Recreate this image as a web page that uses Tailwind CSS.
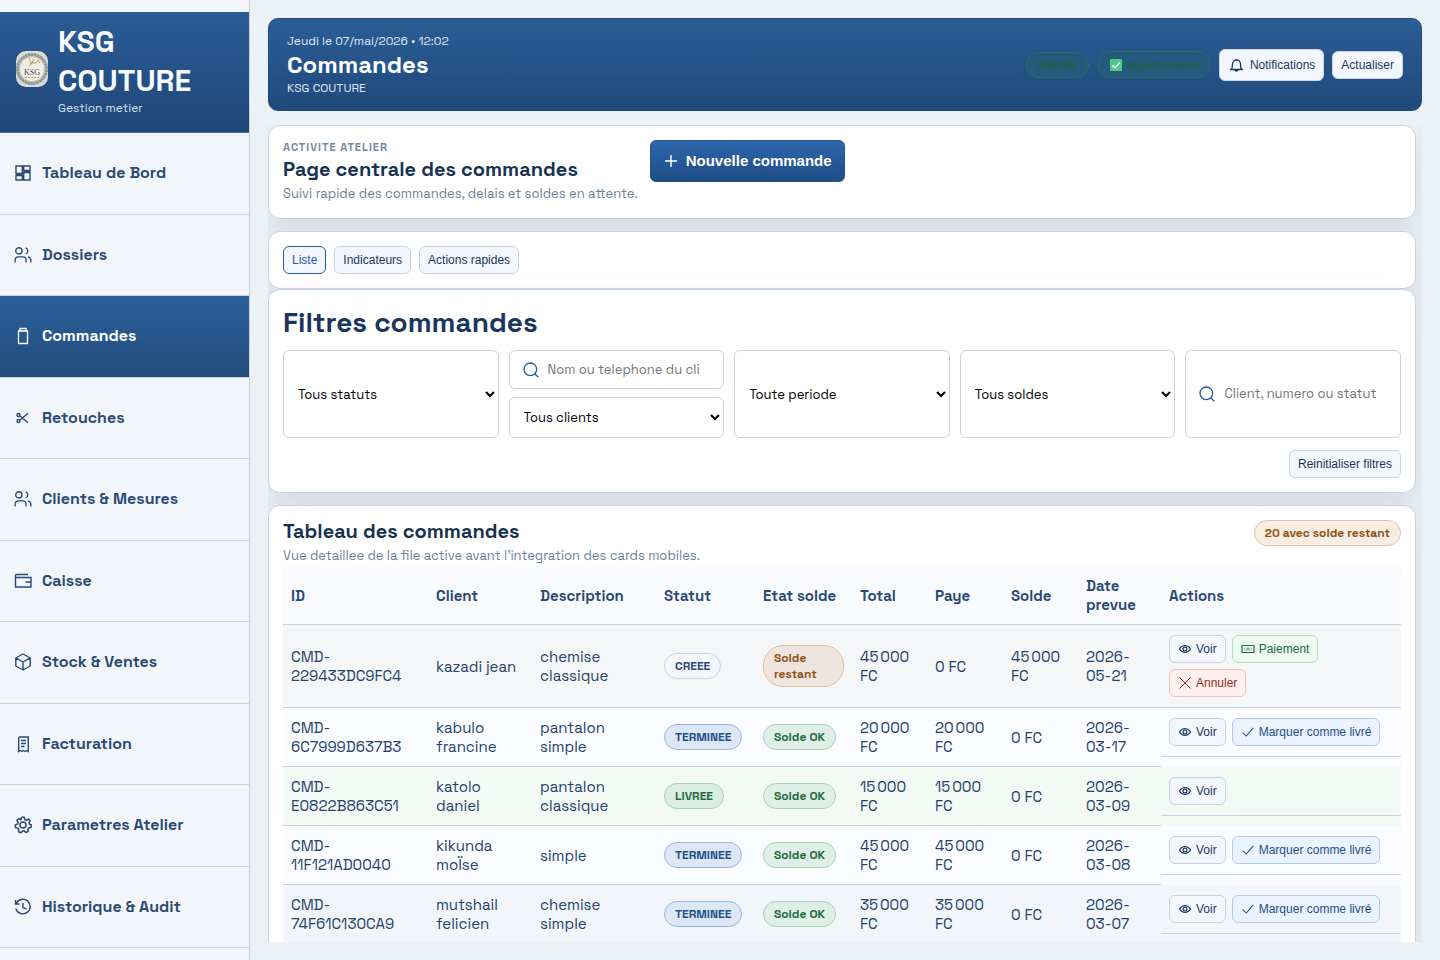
<!DOCTYPE html>
<html lang="fr">

<head>
    <meta charset="UTF-8">
    <meta name="viewport" content="width=device-width, initial-scale=1.0">
    <title>KSG COUTURE - Commandes</title>
    <script src="https://cdn.jsdelivr.net/npm/@tailwindcss/browser@4"></script>
</head>

<body class="h-screen overflow-hidden flex bg-[#ecf1f5] text-[#1b365d] font-['Space_Grotesk',Inter,sans-serif]">
    <!-- icon set -->
    <svg class="hidden" fill="none">
        <symbol id="i-search" viewBox="0 0 24 24"><circle cx="11" cy="11" r="9.500" /><path d="M17.500 17.500l5.500 5.500" /></symbol>
        <symbol id="i-users" viewBox="0 0 24 24"><circle cx="6.500" cy="6.500" r="4.200" /><path d="M1.500 22v-3.500a4 4 0 0 1 4-4h6.500a4 4 0 0 1 4 4V22M15.500 2.500a4.200 4.200 0 0 1 0 8M18.500 14.500c2.500.6 4 2.600 4 5V22" /></symbol>
        <symbol id="i-eye" viewBox="0 0 24 24"><path d="M2.500 12C5 8 8 6 12 6S19 8 21.500 12C19 16 16 18 12 18S5 16 2.500 12z" /><circle cx="12" cy="12" r="3.300" /></symbol>
        <symbol id="i-check" viewBox="0 0 24 24"><path d="M3 13l6 6L21 5" /></symbol>
    </svg>

    <aside class="w-[250px] shrink-0 border-r border-[#c8d3e2] bg-[#f2f6fb] py-3 flex flex-col">
        <div class="flex items-center gap-[10px] px-4 pt-[10px] pb-4 bg-gradient-to-b from-[#2b5c95] to-[#1f4778] border-b border-[#44709f]">
            <svg class="w-8 h-9 shrink-0 rounded-[10px]" viewBox="0 0 32 36" fill="none">
                <rect width="32" height="36" fill="#dedbd1" />
                <circle cx="16" cy="18" r="14.500" fill="#efede6" stroke="#8a959a" stroke-width="3" />
                <circle cx="16" cy="18" r="14.500" stroke="#b9bdb9" stroke-width="2" stroke-dasharray="1 2" />
                <circle cx="16" cy="18" r="12.500" stroke="#c8bfa8" stroke-width="1" />
                <path d="M14 6c-2 2 0 4 1 5s0 4-2 4M14 12h5c2 0 3-2 3-3l2 3M18 8l-3 5" stroke="#b99b62" stroke-width="1" />
                <text x="16" y="24" text-anchor="middle" font-family="Liberation Serif, serif" font-weight="400" font-size="8" fill="#3f505c">KSG</text>
                <path d="M9 26.500h14" stroke="#b99b62" stroke-width="1" stroke-dasharray="2 1" />
            </svg>
            <div>
                <div class="text-[30px] leading-[39px] font-bold text-[#f7fafe]">KSG COUTURE</div>
                <div class="text-xs leading-[16px] text-[#d3e0ef]">Gestion metier</div>
            </div>
        </div>
        <nav class="flex-1 grid auto-rows-fr text-base font-bold text-[#2b4a73]">
            <a href="#" class="flex items-center gap-[10px] px-[14px] border-b border-[#c8d3e2]">
                <svg class="w-[18px] h-[18px]" viewBox="0 0 18 18" fill="none" stroke="currentColor" stroke-width="1.400"><path d="M2 2h6.300v7.500H2zM9.700 2H16v4.500H9.700zM2 11.500h6.300V16H2zM9.700 8.500H16V16H9.700zM2 10.500h6.300M9.700 7.500H16" /></svg>
                Tableau de Bord
            </a>
            <a href="#" class="flex items-center gap-[10px] px-[14px] border-b border-[#c8d3e2]">
                <svg class="w-[18px] h-[18px]" fill="none" stroke="currentColor" stroke-width="1.800"><use href="#i-users" /></svg>
                Dossiers
            </a>
            <a href="#" aria-current="page" class="flex items-center gap-[10px] px-[14px] border-b border-[#c8d3e2] bg-gradient-to-b from-[#2b619d] to-[#234b7a] text-white">
                <svg class="w-[18px] h-[18px]" viewBox="0 0 18 18" fill="none" stroke="currentColor" stroke-width="1.300"><path d="M4.500 4h9v12.500h-9zM6 4V1.500h6V4" /></svg>
                Commandes
            </a>
            <a href="#" class="flex items-center gap-[10px] px-[14px] border-b border-[#c8d3e2]">
                <svg class="w-[18px] h-[18px]" viewBox="0 0 18 18" fill="none" stroke="currentColor" stroke-width="1.400"><circle cx="4.500" cy="6" r="1.500" /><circle cx="4.500" cy="12" r="1.500" /><path d="M6 7l8 6.800M6 11L14 4.200" /></svg>
                Retouches
            </a>
            <a href="#" class="flex items-center gap-[10px] px-[14px] border-b border-[#c8d3e2]">
                <svg class="w-[18px] h-[18px]" fill="none" stroke="currentColor" stroke-width="1.800"><use href="#i-users" /></svg>
                Clients &amp; Mesures
            </a>
            <a href="#" class="flex items-center gap-[10px] px-[14px] border-b border-[#c8d3e2]">
                <svg class="w-[18px] h-[18px]" viewBox="0 0 18 18" fill="none" stroke="currentColor" stroke-width="1.400"><path d="M14 2.500H2.500a1 1 0 0 0-1 1V15H17V5.500H1.500M17 10h-5.500" /></svg>
                Caisse
            </a>
            <a href="#" class="flex items-center gap-[10px] px-[14px] border-b border-[#c8d3e2]">
                <svg class="w-[18px] h-[18px]" viewBox="0 0 18 18" fill="none" stroke="currentColor" stroke-width="1.400" stroke-linejoin="round"><path d="M9 1l7.200 4v8L9 17l-7.200-4V5zM2.300 5.200L9 9l6.700-3.800M9 9v8" /></svg>
                Stock &amp; Ventes
            </a>
            <a href="#" class="flex items-center gap-[10px] px-[14px] border-b border-[#c8d3e2]">
                <svg class="w-[18px] h-[18px]" viewBox="0 0 18 18" fill="none" stroke="currentColor" stroke-width="1.400"><path d="M4.700 16.500V3a1 1 0 0 1 1-1h8.600v14.500l-1.600-1-1.600 1-1.600-1-1.600 1-1.600-1zM7 5.500h5M7 8.500h5M7 11.500h3.500" /></svg>
                Facturation
            </a>
            <a href="#" class="flex items-center gap-[10px] px-[14px] border-b border-[#c8d3e2]">
                <svg class="w-[18px] h-[18px]" viewBox="0 0 24 24" fill="none" stroke="currentColor" stroke-width="2" stroke-linejoin="round"><circle cx="12" cy="12" r="4" /><path d="M10.300 1.800h3.400l.7 3 2 .9L19 4l2.500 2.500-1.600 2.600.8 2 2.500.9-.6 3.400-3 .5-1.200 1.800.7 2.700-3.300 1.600-2.300-2.200h-2l-2 2.500L6 21l.5-3-1.300-1.800-3.200-.7-.4-3.600 3.100-1.200.9-2L3.900 6l2.700-2.600L9.200 5z" /></svg>
                Parametres Atelier
            </a>
            <a href="#" class="flex items-center gap-[10px] px-[14px] border-b border-[#c8d3e2]">
                <svg class="w-[18px] h-[18px]" viewBox="0 0 18 18" fill="none" stroke="currentColor" stroke-width="1.400"><path d="M1.500 2v4h4M2 6a7.300 7.300 0 1 1-.2 4.500M9 5v4.500l3.500 1.700" /></svg>
                Historique &amp; Audit
            </a>
        </nav>
    </aside>

    <main class="flex-1 min-w-0 p-[18px] flex flex-col gap-[14px]">
        <header class="shrink-0 flex items-center justify-between px-[18px] py-[14px] rounded-[10px] border border-[#21487a] bg-gradient-to-b from-[#2c5d96] to-[#1f4a7b]">
            <div>
                <p class="text-xs leading-[16px] text-[#dbe8f6]">Jeudi le 07/mai/2026 • 12:02</p>
                <h1 class="text-[24px] leading-[32px] font-semibold text-white">Commandes</h1>
                <p class="text-xs leading-[15px] text-[#dbe8f6]">KSG COUTURE</p>
            </div>
            <div class="flex items-center gap-2">
                <span class="h-[26px] px-[10px] flex items-center rounded-full border border-[#277060] bg-[#235a7d] text-xs font-bold text-[#1c6348]">ONLINE</span>
                <span class="h-[27px] px-[11px] flex items-center gap-1 rounded-full border border-[#277060] bg-[#235a7d] text-xs font-bold text-[#1c6348]">
                    <svg class="w-[14px] h-[14px]" viewBox="0 0 14 14" fill="none"><rect x="1" y="1" width="12" height="12" rx="1" fill="#4fca86" /><path d="M3.500 7.500L6 9.800l4.800-5.300" stroke="#e9fff2" stroke-width="1.600" /></svg>
                    Synchronisé
                </span>
                <button type="button" class="h-8 px-2 flex items-center gap-[6px] rounded-[6px] border border-[#c8d5e6] bg-[#f3f7fd] text-[#1b365d] text-xs font-['Liberation_Sans',Arial,sans-serif]">
                    <svg class="w-4 h-4" viewBox="0 0 16 16" fill="none" stroke="currentColor" stroke-width="1.300" stroke-linejoin="round"><path d="M2 12.500h13M3.500 12.300c1-1.500 1-3 1-5.300a4 4 0 0 1 8 0c0 2.500 0 4 1 5.300M7 12.500a1.500 1.500 0 0 0 3 0" /></svg>
                    Notifications
                </button>
                <button type="button" class="h-7 px-2 rounded-[6px] border border-[#c8d5e6] bg-[#f3f7fd] text-[#1b365d] text-xs font-['Liberation_Sans',Arial,sans-serif]">Actualiser</button>
            </div>
        </header>

        <div class="flex-1 min-h-0 overflow-hidden pr-[6px]">
            <section class="mb-3 p-[14px] flex items-start gap-3 rounded-xl border border-[#c8d3e2] bg-white shadow-[0_10px_24px_rgba(30,60,120,0.12)]">
                <div>
                    <p class="text-[11px] leading-[15px] font-bold tracking-[1px] text-[#7389a6]">ACTIVITE ATELIER</p>
                    <h2 class="text-[20px] leading-[28px] font-semibold text-[#16324f]">Page centrale des commandes</h2>
                    <p class="text-[13px] leading-[21px] text-[#6b7f9c]">Suivi rapide des commandes, delais et soldes en attente.</p>
                </div>
                <button type="button" class="h-[42px] px-3 flex items-center gap-[7px] rounded-[6px] border border-[#21508a] bg-gradient-to-b from-[#2d66ab] to-[#1f4d86] text-white text-[15px] font-bold font-['Liberation_Sans',Arial,sans-serif]">
                    <svg class="w-4 h-4" viewBox="0 0 16 16" fill="none" stroke="currentColor" stroke-width="1.400"><path d="M8 2v12M2 8h12" /></svg>
                    Nouvelle commande
                </button>
            </section>

            <section class="p-[14px] flex gap-2 rounded-xl border border-[#c8d3e2] bg-white shadow-[0_10px_24px_rgba(30,60,120,0.12)] text-xs font-['Liberation_Sans',Arial,sans-serif]">
                <button type="button" class="h-7 px-2 rounded-[6px] border border-[#235ba5] bg-[#f3f7fd] text-[#235ba5]">Liste</button>
                <button type="button" class="h-7 px-2 rounded-[6px] border border-[#c8d3e2] bg-[#f3f7fd]">Indicateurs</button>
                <button type="button" class="h-7 px-2 rounded-[6px] border border-[#c8d3e2] bg-[#f3f7fd]">Actions rapides</button>
            </section>

            <section class="mb-3 p-[14px] rounded-xl border border-[#c8d3e2] bg-white shadow-[0_10px_24px_rgba(30,60,120,0.12)]">
                <h2 class="text-[28px] leading-[36px] mb-[10px] font-semibold">Filtres commandes</h2>
                <div class="grid grid-cols-5 gap-[10px] text-[13px] text-black">
                    <select aria-label="Statut" class="w-full min-w-0 px-[10px] rounded-[6px] border border-[#c8d3e2] bg-white">
                        <option>Tous statuts</option>
                    </select>
                    <div class="min-w-0 flex flex-col gap-2">
                        <label class="h-[39px] flex items-center gap-[9px] px-[13px] rounded-[6px] border border-[#c8d3e2]">
                            <svg class="w-4 h-4 shrink-0 text-[#235ba5]" fill="none" stroke="currentColor" stroke-width="2"><use href="#i-search" /></svg>
                            <input type="text" aria-label="Nom ou telephone" placeholder="Nom ou telephone du client" class="flex-1 min-w-0 mr-[10px] outline-none placeholder:text-[#757575]">
                        </label>
                        <select aria-label="Client" class="w-full h-[41px] px-[10px] rounded-[6px] border border-[#c8d3e2] bg-white">
                            <option>Tous clients</option>
                        </select>
                    </div>
                    <select aria-label="Periode" class="w-full min-w-0 px-[10px] rounded-[6px] border border-[#c8d3e2] bg-white">
                        <option>Toute periode</option>
                    </select>
                    <select aria-label="Solde" class="w-full min-w-0 px-[10px] rounded-[6px] border border-[#c8d3e2] bg-white">
                        <option>Tous soldes</option>
                    </select>
                    <label class="min-w-0 flex items-center gap-[9px] px-[13px] rounded-[6px] border border-[#c8d3e2]">
                        <svg class="w-4 h-4 shrink-0 text-[#235ba5]" fill="none" stroke="currentColor" stroke-width="2"><use href="#i-search" /></svg>
                        <input type="text" aria-label="Recherche" placeholder="Client, numero ou statut" class="flex-1 min-w-0 mr-[10px] outline-none placeholder:text-[#757575]">
                    </label>
                </div>
                <div class="mt-3 flex justify-end">
                    <button type="button" class="h-7 px-2 rounded-[6px] border border-[#c8d3e2] bg-[#f3f7fd] text-xs font-['Liberation_Sans',Arial,sans-serif]">Reinitialiser filtres</button>
                </div>
            </section>

            <section class="p-[14px] rounded-xl border border-[#c8d3e2] bg-white shadow-[0_10px_24px_rgba(30,60,120,0.12)]">
                <div class="flex items-start justify-between">
                    <div>
                        <h2 class="text-[20px] leading-[22px] mb-1 font-semibold text-[#16324f]">Tableau des commandes</h2>
                        <p class="text-[13px] leading-[20px] text-[#6b7f9c]">Vue detaillee de la file active avant l'integration des cards mobiles.</p>
                    </div>
                    <span class="h-[26px] px-[10px] flex items-center rounded-full border border-[#e2c3a1] bg-[#f7ede2] text-xs font-bold text-[#8f5316]">20 avec solde restant</span>
                </div>
                <table class="w-full table-fixed border-separate border-spacing-0 text-[15px] leading-[19px] text-left text-[#24426b]">
                    <colgroup>
                        <col class="w-[145px]"><col class="w-[104px]"><col class="w-[124px]"><col class="w-[99px]"><col class="w-[97px]">
                        <col class="w-[75px]"><col class="w-[76px]"><col class="w-[75px]"><col class="w-[83px]"><col>
                    </colgroup>
                    <thead class="bg-[#f8fafe] text-[#2b4a73]">
                        <tr>
                            <th class="px-2 py-[10px] border-b border-[#c8d3e2]">ID</th>
                            <th class="px-2 py-[10px] border-b border-[#c8d3e2]">Client</th>
                            <th class="px-2 py-[10px] border-b border-[#c8d3e2]">Description</th>
                            <th class="px-2 py-[10px] border-b border-[#c8d3e2]">Statut</th>
                            <th class="px-2 py-[10px] border-b border-[#c8d3e2] whitespace-nowrap">Etat solde</th>
                            <th class="px-2 py-[10px] border-b border-[#c8d3e2]">Total</th>
                            <th class="px-2 py-[10px] border-b border-[#c8d3e2]">Paye</th>
                            <th class="px-2 py-[10px] border-b border-[#c8d3e2]">Solde</th>
                            <th class="px-2 py-[10px] border-b border-[#c8d3e2]">Date prevue</th>
                            <th class="px-2 py-[10px] border-b border-[#c8d3e2]">Actions</th>
                        </tr>
                    </thead>
                    <tbody id="orders"></tbody>
                </table>
            </section>
        </div>
    </main>

    <script>
        const orders = [
            { id: '229433DC9FC4', client: 'kazadi jean', desc: 'chemise<br>classique', status: 'CREEE', total: '45&#8239;000<br>FC', paid: '0 FC', due: '45&#8239;000<br>FC', date: '05-21', row: 'bg-[#f5f6f7]' },
            { id: '6C7999D637B3', client: 'kabulo<br>francine', desc: 'pantalon<br>simple', status: 'TERMINEE', total: '20&#8239;000<br>FC', paid: '20&#8239;000<br>FC', due: '0 FC', date: '03-17', row: 'bg-[#fafcff]' },
            { id: 'E0822B863C51', client: 'katolo<br>daniel', desc: 'pantalon<br>classique', status: 'LIVREE', total: '15&#8239;000<br>FC', paid: '15&#8239;000<br>FC', due: '0 FC', date: '03-09', row: 'bg-[#f3f9f5]' },
            { id: '11F121AD0040', client: 'kikunda<br>moÏse', desc: 'simple', status: 'TERMINEE', total: '45&#8239;000<br>FC', paid: '45&#8239;000<br>FC', due: '0 FC', date: '03-08', row: 'bg-[#fafcff]' },
            { id: '74F61C130CA9', client: 'mutshail<br>felicien', desc: 'chemise<br>simple', status: 'TERMINEE', total: '35&#8239;000<br>FC', paid: '35&#8239;000<br>FC', due: '0 FC', date: '03-07', row: 'bg-[#f2f5fa]' }
        ];

        const statusStyle = {
            CREEE: 'border-[#c8d3e2] bg-[#f3f7fd] text-[#2b4a73]',
            TERMINEE: 'border-[#9db7dc] bg-[#dde6f4] text-[#235089]',
            LIVREE: 'border-[#a5d3b4] bg-[#dbece2] text-[#226b40]'
        };

        const cell = 'px-2 py-[10px] align-middle border-b border-[#c8d3e2]';
        const pill = 'inline-flex items-center align-middle px-[10px] py-[4px] leading-[16px] rounded-[20px] border text-xs font-bold';
        const btn = 'h-7 px-2 flex items-center gap-1 rounded-[6px] border';

        const view = `<button type="button" class="${btn} border-[#c8d3e2] bg-[#f3f7fd] text-[#1b365d]"><svg class="w-[14px] h-[14px]" fill="none" stroke="currentColor" stroke-width="2"><use href="#i-eye" /></svg>Voir</button>`;
        const deliver = `<button type="button" class="${btn} border-[#b3cbe9] bg-[#ebf3fe] text-[#235089]"><svg class="w-[14px] h-[14px]" fill="none" stroke="currentColor" stroke-width="1.800"><use href="#i-check" /></svg>Marquer comme livré</button>`;
        const pay = `<button type="button" class="${btn} border-[#b5dfc2] bg-[#edf9f1] text-[#226b40]"><svg class="w-[14px] h-[14px]" viewBox="0 0 14 14" fill="none" stroke="currentColor" stroke-width="1.200"><path d="M1 3.500h12v7H1z" /><path d="M3.500 5.500v3M5.500 5.500v3M8.500 5.500v3M10.500 5.500v3" opacity=".4" /><path d="M7 5.500v3" opacity=".8" /></svg>Paiement</button>`;
        const cancel = `<button type="button" class="${btn} border-[#f2c2bd] bg-[#fff0ee] text-[#952b20]"><svg class="w-[14px] h-[14px]" viewBox="0 0 14 14" fill="none" stroke="currentColor" stroke-width="1"><path d="M1.500 1.500l11 11M12.500 1.500l-11 11" /></svg>Annuler</button>`;
        const actions = { CREEE: view + pay + cancel, TERMINEE: view + deliver, LIVREE: view };

        document.getElementById('orders').innerHTML = orders.map(o => `
            <tr class="${o.row}">
                <td class="${cell}">CMD-<br>${o.id}</td>
                <td class="${cell} whitespace-nowrap">${o.client}</td>
                <td class="${cell}">${o.desc}</td>
                <td class="${cell}"><span class="${pill} ${statusStyle[o.status]}">${o.status}</span></td>
                <td class="${cell}">${o.status === 'CREEE'
                    ? `<span class="${pill} border-[#e2bf9d] bg-[#ede5de] text-[#8f5316]">Solde restant</span>`
                    : `<span class="${pill} whitespace-nowrap border-[#a5d3b4] bg-[#dfeee7] text-[#226b40]">Solde OK</span>`}</td>
                <td class="${cell} whitespace-nowrap">${o.total}</td>
                <td class="${cell} whitespace-nowrap">${o.paid}</td>
                <td class="${cell} whitespace-nowrap">${o.due}</td>
                <td class="${cell}">2026-<br>${o.date}</td>
                <td class="p-0 align-top"><div class="flex flex-wrap gap-[6px] px-2 py-[10px] border-b border-[#c8d3e2] text-xs font-['Liberation_Sans',Arial,sans-serif]">${actions[o.status]}</div></td>
            </tr>`).join('');
    </script>
</body>

</html>
